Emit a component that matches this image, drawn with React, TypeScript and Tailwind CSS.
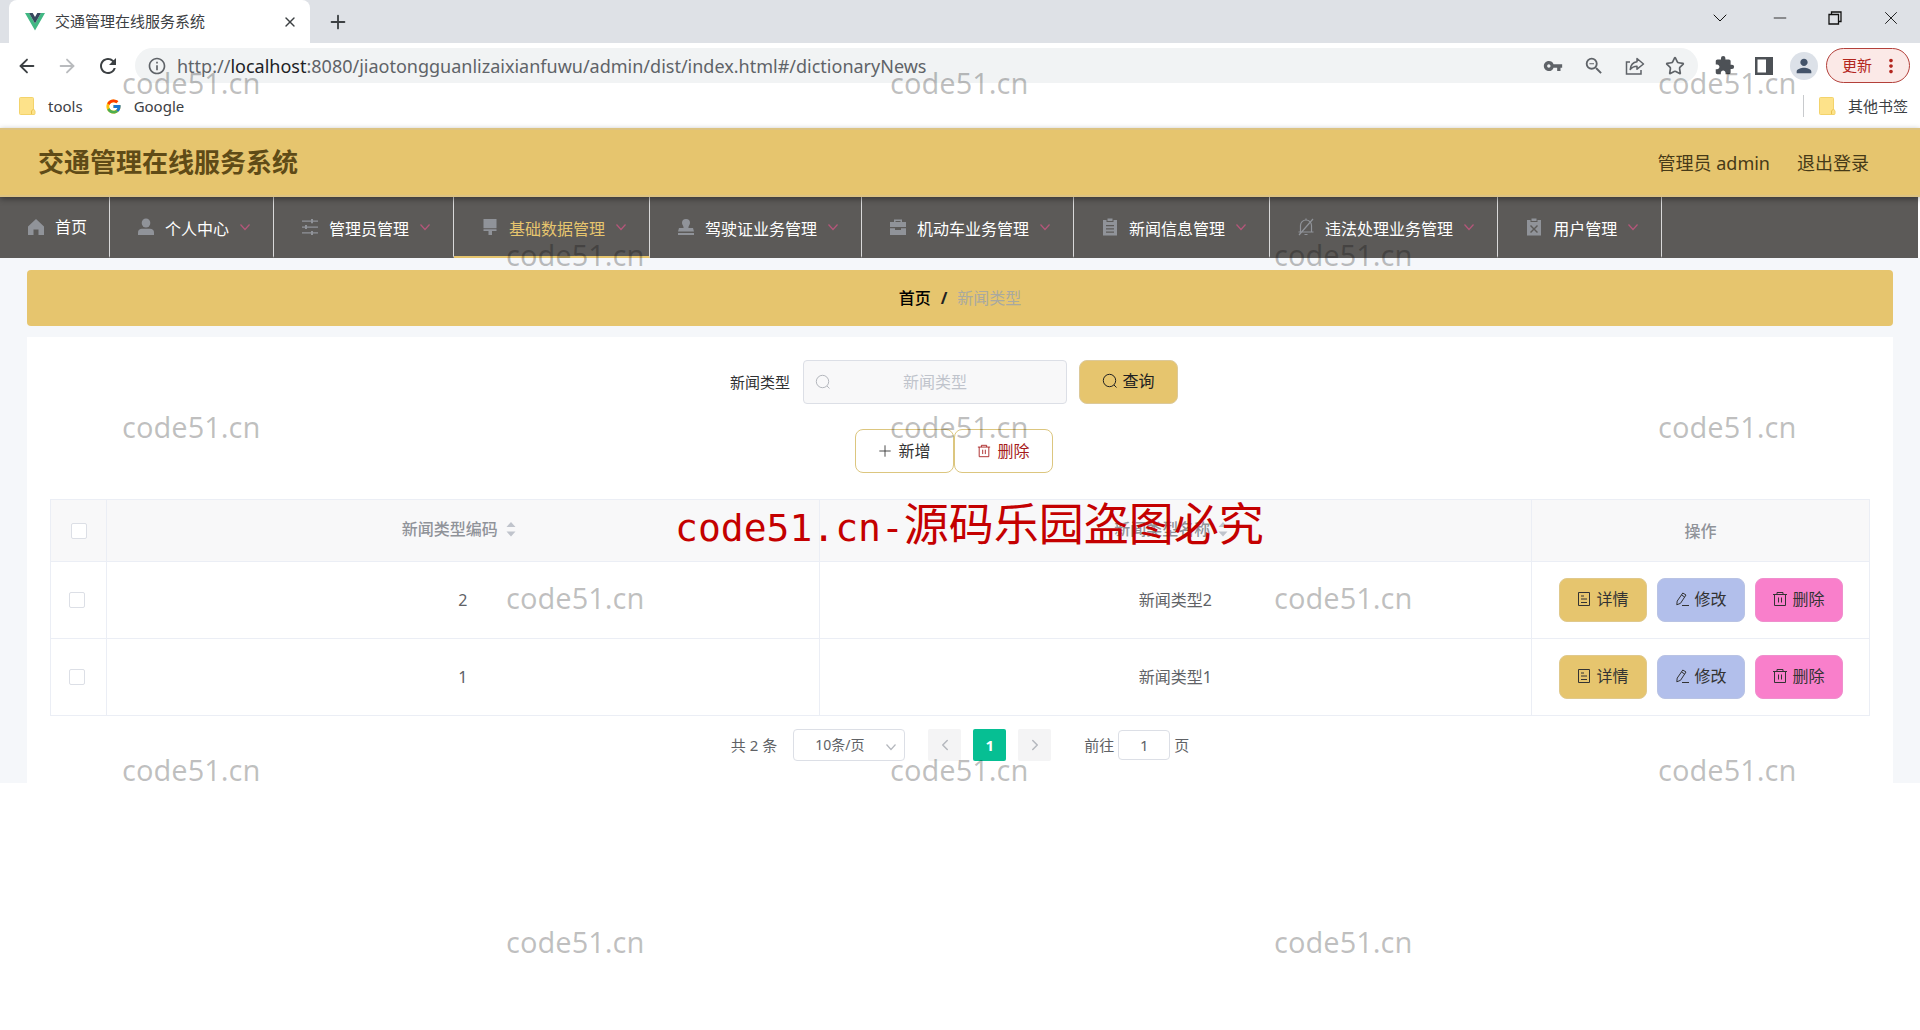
import React from "react";
import {
  ArrowLeft,
  ArrowRight,
  ChevronDown,
  ChevronLeft,
  ChevronRight,
  Minus,
  Plus,
  Star,
  X,
} from "lucide-react";
import { FcGoogle } from "react-icons/fc";
import {
  MdExtension,
  MdInfoOutline,
  MdMoreVert,
  MdPerson,
  MdRefresh,
  MdVpnKey,
  MdZoomOut,
} from "react-icons/md";

type IconProps = { className?: string };

const VueLogo = () => (
  <svg viewBox="0 0 20 18" className="w-5 h-[18px]">
    <path d="M0 0h4l6 10.400L16 0h4L10 17.500z" fill="#41b883" />
    <path d="M4 0h3.700L10 4l2.300-4H16l-6 10.400z" fill="#35495e" />
  </svg>
);

const FolderIcon = () => (
  <svg viewBox="0 0 17 18" className="w-[17px] h-[18px]">
    <path d="M1.500.5h12a1 1 0 0 1 1 1v10.500l1.500 2v2.500a1 1 0 0 1-1 1H1.500a1 1 0 0 1-1-1v-15a1 1 0 0 1 1-1z" fill="#fde28a" stroke="#f3d36b" />
    <path d="M12.500 17v-3l2-2" fill="none" stroke="#e9c24d" />
  </svg>
);

const ShareIcon = () => (
  <svg viewBox="0 0 20 18" className="w-5 h-[18px]" fill="none" stroke="#5f6368" strokeWidth="1.500">
    <path d="M5 5H1.500v12H16v-4" />
    <path d="M12 1.500 18.500 7 12 12.200V9.200c-3 0-5 .8-6.800 3.300.4-4.300 2.800-7.300 6.800-7.800z" strokeLinejoin="round" />
  </svg>
);

const SidePanelIcon = () => (
  <svg viewBox="0 0 18 18" className="w-[18px] h-[18px]">
    <path d="M0 0h18v18H0zM2.500 2.500v13H11v-13z" fill="#4d5156" fillRule="evenodd" />
  </svg>
);

const RestoreIcon = () => (
  <svg viewBox="0 0 14 14" className="w-3.5 h-3.5" fill="none" stroke="#111" strokeWidth="1.300">
    <path d="M1 3.500h9.500V13H1zM3.500 3.500V1H13v9.500h-2.500" />
  </svg>
);

const HomeIcon = () => <path d="M9 1 1 8.500V17h5.500v-5.500h5V17H17V8.500z" />;
const UserIcon = () => (
  <>
    <ellipse cx="9" cy="5" rx="4.300" ry="4.500" />
    <path d="M1 17v-2.500c0-2.500 1.700-3.700 4-3.700h8c2.300 0 4 1.200 4 3.700V17z" />
  </>
);
const OperationIcon = () => (
  <path d="M1 2.500h9V1h2v1.500h5v1.300h-5v1.400h-2V3.800H1zM1 8.400h3V7h2v1.400h11v1.300H6V11H4V9.700H1zM1 14.300h9V13h2v1.300h5v1.300h-5V17h-2v-1.400H1z" />
);
const BrushIcon = () => <path d="M2.500 1h13v9.300h-13zM2.500 11.300h13V13H11v4H7.500v-4h-5z" />;
const StampIcon = () => (
  <path d="M9 1a4 4 0 0 1 4 4c0 2-1.600 2.600-1.600 5H16l1 3.500H1L2 10h4.600c0-2.400-1.600-3-1.600-5a4 4 0 0 1 4-4zM1 15h16v2H1z" />
);
const CaseIcon = () => (
  <path d="M5 4V1.500h8V4h4v5H1V4zm1.500 0h5V3h-5zM1 10.300h5V12h6v-1.700h5V17H1z" fillRule="evenodd" />
);
const OrderIcon = () => (
  <path d="M2 2h3.500v2h7V2H16v15.500H2zM6.500.5h5V3h-5zM5 7v1.300h8V7zm0 3.200v1.300h8v-1.300zm0 3.200v1.300h8v-1.300z" fillRule="evenodd" />
);
const BellOffIcon = () => (
  <g fill="none" stroke="currentColor" strokeWidth="1.200">
    <path d="M1.500 14h15M3.500 14V7.500A5.500 5.500 0 0 1 9 2a5.500 5.500 0 0 1 5.500 5.500V14M2 17 16 1M7.500 16.500h3M9 .5V2" />
  </g>
);
const ReleaseIcon = () => (
  <path d="M2 2h3.500v2h7V2H16v15.500H2zM6.500.5h5V3h-5zM6 7l-1 1 3 3-3 3 1 1 3-3 3 3 1-1-3-3 3-3-1-1-3 3z" fillRule="evenodd" />
);

const SearchIcon = ({ className }: IconProps) => (
  <svg viewBox="0 0 16 16" className={className} fill="none" stroke="currentColor">
    <circle cx="7.500" cy="7.500" r="6.200" />
    <path d="m12 12 2.500 2.500" />
  </svg>
);

const PlusIcon = ({ className }: IconProps) => (
  <svg viewBox="0 0 16 16" className={className} fill="none" stroke="currentColor">
    <path d="M8 1.500v13M1.500 8h13" />
  </svg>
);

const TrashIcon = ({ className }: IconProps) => (
  <svg viewBox="0 0 16 16" className={className} fill="none" stroke="currentColor">
    <path d="M1 3.500h14M5 3.500v-2h6v2M2.500 3.500v11h11v-11M6.500 6.500v5M9.500 6.500v5" />
  </svg>
);

const DocIcon = ({ className }: IconProps) => (
  <svg viewBox="0 0 16 16" className={className} fill="none" stroke="currentColor">
    <path d="M2.500 1.500h11v13h-11zM5 5h3M5 8h6M5 11.500h6" />
  </svg>
);

const EditIcon = ({ className }: IconProps) => (
  <svg viewBox="0 0 16 16" className={className} fill="none" stroke="currentColor">
    <path d="M8.800 2 12 4 6.500 12.300l-3.700 1.500.4-3.700zM7.500 4l3.200 2M8 14.500h7" />
  </svg>
);

const ArrowDownIcon = ({ className }: IconProps) => (
  <svg viewBox="0 0 12 12" className={className} fill="none" stroke="currentColor" strokeWidth="1.200">
    <path d="m1.500 3.500 4.500 5 4.500-5" />
  </svg>
);

const SortIcon = () => (
  <svg viewBox="0 0 10 16" className="w-2.5 h-4" fill="#c0c4cc">
    <path d="M5 1 9.500 6H.5zM5 15.500.5 10.500h9z" />
  </svg>
);

const menus = [
  { label: "首页", icon: <HomeIcon />, single: true },
  { label: "个人中心", icon: <UserIcon /> },
  { label: "管理员管理", icon: <OperationIcon /> },
  { label: "基础数据管理", icon: <BrushIcon />, active: true },
  { label: "驾驶证业务管理", icon: <StampIcon /> },
  { label: "机动车业务管理", icon: <CaseIcon /> },
  { label: "新闻信息管理", icon: <OrderIcon /> },
  { label: "违法处理业务管理", icon: <BellOffIcon /> },
  { label: "用户管理", icon: <ReleaseIcon /> },
];

const rows = [
  { code: 2, name: "新闻类型2" },
  { code: 1, name: "新闻类型1" },
];

const marks = [
  "left-[122px] top-[63px]",
  "left-[890px] top-[63px]",
  "left-[1658px] top-[63px]",
  "left-[506px] top-[235px]",
  "left-[1274px] top-[235px]",
  "left-[122px] top-[407px]",
  "left-[890px] top-[407px]",
  "left-[1658px] top-[407px]",
  "left-[506px] top-[578px]",
  "left-[1274px] top-[578px]",
  "left-[122px] top-[750px]",
  "left-[890px] top-[750px]",
  "left-[1658px] top-[750px]",
  "left-[506px] top-[922px]",
  "left-[1274px] top-[922px]",
];

const BrowserBar = () => (
  <div className="bg-white text-[#3c4043]">
    <div className="flex items-end h-[43px] bg-[#dee1e6] pl-[9px]">
      <div className="flex items-center self-stretch w-[301px] rounded-t-lg bg-white pl-4 pr-3">
        <VueLogo />
        <span className="ml-2.5 flex-1 text-[15px]">交通管理在线服务系统</span>
        <button type="button" aria-label="关闭标签页">
          <X size={16} strokeWidth={2} />
        </button>
      </div>
      <button type="button" aria-label="新标签页" className="self-center ml-[17px]">
        <Plus size={22} strokeWidth={2} />
      </button>
      <div className="flex items-center gap-[38px] ml-auto mr-[18px] self-start h-9 text-[#111]">
        <button type="button" aria-label="搜索标签页"><ChevronDown size={24} strokeWidth={1} /></button>
        <button type="button" aria-label="最小化"><Minus size={20} strokeWidth={1} /></button>
        <button type="button" aria-label="还原"><RestoreIcon /></button>
        <button type="button" aria-label="关闭"><X size={22} strokeWidth={1} /></button>
      </div>
    </div>
    <div className="flex items-center h-[45px] pl-4 pr-2.5">
      <button type="button" aria-label="后退"><ArrowLeft size={22} strokeWidth={2} /></button>
      <button type="button" aria-label="前进" className="ml-[18px] text-[#b9bbbe]"><ArrowRight size={22} strokeWidth={2} /></button>
      <button type="button" aria-label="刷新" className="ml-[18px]"><MdRefresh size={24} /></button>
      <div className="flex items-center flex-1 h-[35px] ml-[15px] pl-3 pr-[13px] rounded-full bg-[#f1f3f4] text-[#5f6368]">
        <MdInfoOutline size={20} />
        <span className="ml-2.5 flex-1 text-lg">
          http://<span className="text-[#202124]">localhost</span>:8080/jiaotongguanlizaixianfuwu/admin/dist/index.html#/dictionaryNews
        </span>
        <div className="flex items-center gap-5">
          <MdVpnKey size={20} />
          <MdZoomOut size={22} />
          <ShareIcon />
          <Star size={20} strokeWidth={2} />
        </div>
      </div>
      <MdExtension size={21} className="ml-4 text-[#4d5156]" />
      <span className="ml-5"><SidePanelIcon /></span>
      <span className="flex items-center justify-center w-7 h-7 ml-[17px] rounded-full bg-[#dce1e8] text-[#44546a]">
        <MdPerson size={22} />
      </span>
      <button type="button" className="flex items-center h-[35px] w-[84px] ml-2 pl-[15px] rounded-full border border-[#b3403a] bg-[#fbe9e7] text-[15px] text-[#b3261e]">
        更新
        <MdMoreVert size={22} className="ml-2" />
      </button>
    </div>
    <div className="flex items-center h-10 pb-1 pl-[19px] pr-3 text-[15px]">
      <FolderIcon />
      <a href="#tools" className="ml-3">tools</a>
      <FcGoogle size={17} className="ml-[22px]" />
      <a href="#google" className="ml-3">Google</a>
      <div className="flex items-center ml-auto border-l border-[#c8cacd] pl-[15px]">
        <FolderIcon />
        <a href="#other" className="ml-3">其他书签</a>
      </div>
    </div>
  </div>
);

const NavBar = () => (
  <nav className="flex h-[61px] mr-0.5 bg-[#5c5a58]">
    {menus.map((m) => (
      <a
        key={m.label}
        href="#menu"
        className={
          m.active
            ? "flex items-center pl-[27px] pr-[22px] border-r border-r-[#d9d9d9] border-b-2 border-b-[#e6c56e] text-[#e6c56e]"
            : "flex items-center pl-[27px] pr-[22px] border-r border-r-[#d9d9d9] border-b-2 border-b-transparent text-white"
        }
      >
        <svg viewBox="0 0 18 18" className="w-[18px] h-[18px] text-[#909399]" fill="currentColor">
          {m.icon}
        </svg>
        <span className={m.single ? "ml-2.5 text-base" : "ml-2.5 pt-1 text-base"}>{m.label}</span>
        {!m.single && <ArrowDownIcon className="w-3 h-3 ml-2.5 text-[#b5567a]" />}
      </a>
    ))}
  </nav>
);

const DataTable = () => (
  <table className="w-full table-fixed border-collapse text-base text-center text-[#606266]">
    <thead>
      <tr className="h-[62px] bg-[#f8f8f9] text-[#909399]">
        <th className="w-14 border border-[#ebeef5]">
          <input type="checkbox" aria-label="全选" className="block mx-auto w-4 h-4 appearance-none rounded-xs border border-[#dcdfe6] bg-white" />
        </th>
        <th className="pr-2 pb-1 border border-[#ebeef5] font-medium">
          <span className="inline-flex items-center gap-2">新闻类型编码<SortIcon /></span>
        </th>
        <th className="pr-2 pb-1 border border-[#ebeef5] font-medium">
          <span className="inline-flex items-center gap-2">新闻类型名称<SortIcon /></span>
        </th>
        <th className="w-[338px] border border-[#ebeef5] font-medium">操作</th>
      </tr>
    </thead>
    <tbody>
      {rows.map((r) => (
        <tr key={r.code} className="h-[77px]">
          <td className="pr-1 border border-[#ebeef5]">
            <input type="checkbox" aria-label={r.name} className="block mx-auto w-4 h-4 appearance-none rounded-xs border border-[#dcdfe6] bg-white" />
          </td>
          <td className="border border-[#ebeef5]">{r.code}</td>
          <td className="border border-[#ebeef5]">{r.name}</td>
          <td className="border border-[#ebeef5]">
            <div className="flex justify-center gap-2.5 text-[#333]">
              <button type="button" className="flex items-center justify-center gap-1 w-[88px] h-11 pb-0.5 rounded-lg border border-[#e0c98c] bg-[#e6c56e]">
                <DocIcon className="w-4 h-4" />详情
              </button>
              <button type="button" className="flex items-center justify-center gap-1 w-[88px] h-11 pb-0.5 rounded-lg border border-[#b9c3e4] bg-[#b2bfeb]">
                <EditIcon className="w-4 h-4" />修改
              </button>
              <button type="button" className="flex items-center justify-center gap-1 w-[88px] h-11 pb-0.5 rounded-lg border border-[#ef8fcd] bg-[#f97fcb]">
                <TrashIcon className="w-4 h-4" />删除
              </button>
            </div>
          </td>
        </tr>
      ))}
    </tbody>
  </table>
);

const Pagination = () => (
  <div className="flex items-center justify-center h-8 mt-[13px] text-[15px] text-[#606266]">
    <span>共 2 条</span>
    <div className="relative ml-4">
      <select aria-label="每页条数" className="block w-28 h-8 pl-[21px] appearance-none rounded-sm border border-[#dcdfe6] bg-white text-sm">
        <option>10条/页</option>
      </select>
      <ArrowDownIcon className="absolute right-2 top-3 w-3 h-3 text-[#b4b7bd] pointer-events-none" />
    </div>
    <button type="button" aria-label="上一页" className="flex items-center justify-center w-[33px] h-8 ml-[23px] rounded-xs bg-[#f4f4f5] text-[#b5b8be]">
      <ChevronLeft size={18} />
    </button>
    <button type="button" className="w-[33px] h-8 ml-3 rounded-xs bg-[#06bf93] font-bold text-white">1</button>
    <button type="button" aria-label="下一页" className="flex items-center justify-center w-[33px] h-8 ml-3 rounded-xs bg-[#f4f4f5] text-[#b5b8be]">
      <ChevronRight size={18} />
    </button>
    <label htmlFor="jump" className="ml-[33px]">前往</label>
    <input id="jump" defaultValue="1" className="w-[52px] h-[30px] mx-1 rounded-sm border border-[#dcdfe6] text-center" />
    <span>页</span>
  </div>
);

const App = () => {
  return (
    <div className="relative min-h-screen overflow-hidden bg-white font-['Noto_Sans','Noto_Sans_CJK_SC',sans-serif]">
      <BrowserBar />
      <header className="relative flex items-center justify-between h-[69px] pl-[38px] pr-[51px] border-y-2 border-[#dcc382] bg-[#e6c56e] shadow-[0_2px_6px_rgba(0,0,0,0.4)]">
        <h1 className="text-[26px] font-bold text-[#5f4b17]">交通管理在线服务系统</h1>
        <div className="flex gap-[27px] text-lg text-[#463a18]">
          <span>管理员 admin</span>
          <a href="#logout">退出登录</a>
        </div>
      </header>
      <NavBar />
      <main className="px-[27px] pt-3 bg-[#f5f7fa]">
        <div className="flex items-center justify-center gap-2.5 h-14 rounded-sm bg-[#e6c56e] text-base">
          <a href="#home" className="font-medium text-black">首页</a>
          <span className="font-bold text-[#222]">/</span>
          <span className="text-[#a9a9a0]">新闻类型</span>
        </div>
        <section className="mt-[11px] px-[23px] pt-[23px] pb-[22px] bg-white">
          <form className="flex items-center justify-center pr-3">
            <label htmlFor="type" className="text-[15px] text-[#303133]">新闻类型</label>
            <div className="relative ml-[13px]">
              <SearchIcon className="absolute left-3 top-3.5 w-4 h-4 text-[#b4b7bd]" />
              <input
                id="type"
                placeholder="新闻类型"
                className="block w-[264px] h-11 rounded-sm border border-[#dcdfe6] bg-[#f8f8f9] text-center text-base placeholder:text-[#c0c4cc]"
              />
            </div>
            <button type="button" className="flex items-center justify-center gap-1 w-[99px] h-11 pb-0.5 ml-3 rounded-lg border border-[#dcc99a] bg-[#e6c56e] text-base text-[#222]">
              <SearchIcon className="w-4 h-4" />查询
            </button>
          </form>
          <div className="flex justify-center pr-3 mt-[25px] mb-[26px] text-base">
            <button type="button" className="flex items-center justify-center gap-1.5 w-[99px] h-11 rounded-lg border border-[#dcc67f] text-[#333]">
              <PlusIcon className="w-3.5 h-3.5" />新增
            </button>
            <button type="button" className="flex items-center justify-center gap-1.5 w-[99px] h-11 rounded-lg border border-[#dcc67f] text-[#a61b1b]">
              <TrashIcon className="w-3.5 h-3.5" />删除
            </button>
          </div>
          <DataTable />
          <Pagination />
        </section>
      </main>

      <div className="absolute inset-0 pointer-events-none" aria-hidden="true">
        {marks.map((pos) => (
          <span key={pos} className={`absolute ${pos} text-[29px] leading-10 text-black/25`}>
            code51.cn
          </span>
        ))}
        <p className="absolute left-[675px] top-[494px] text-[45px] leading-[60px] whitespace-nowrap text-[#c40000]">
          <span className="font-['DejaVu_Sans_Mono',monospace] text-[38px]">code51.cn-</span>源码乐园盗图必究
        </p>
      </div>
    </div>
  );
};

export default App;
